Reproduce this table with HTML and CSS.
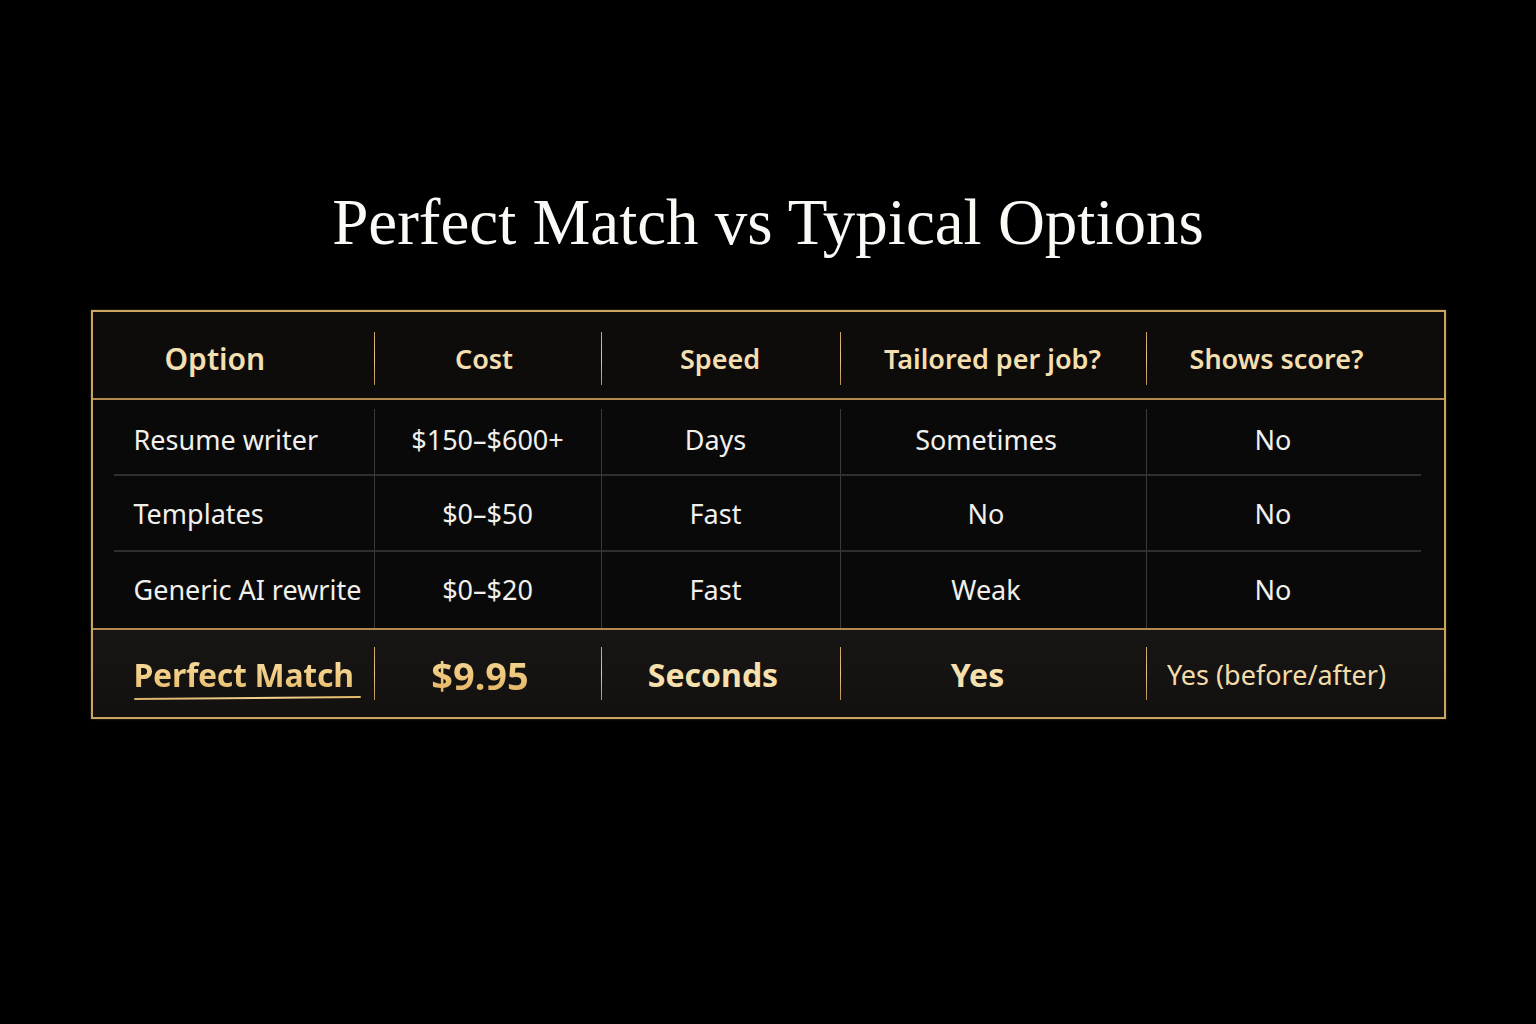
FILE: index.html
```html
<!DOCTYPE html>
<html lang="en">
<head>
<meta charset="utf-8">
<title>Perfect Match vs Typical Options</title>
<link rel="stylesheet" href="styles.css">
</head>
<body>
<main class="page">
  <h1 class="title">Perfect Match vs Typical Options</h1>
  <section class="table">
    <div class="row head">
      <div class="cell c1">Option</div>
      <div class="cell c2 div-gold">Cost</div>
      <div class="cell c3 div-gold">Speed</div>
      <div class="cell c4 div-gold">Tailored per job?</div>
      <div class="cell c5 div-gold">Shows score?</div>
    </div>
    <div class="body">
      <div class="row brow sep">
        <div class="cell c1">Resume writer</div>
        <div class="cell c2">$150–$600+</div>
        <div class="cell c3">Days</div>
        <div class="cell c4">Sometimes</div>
        <div class="cell c5">No</div>
      </div>
      <div class="row brow sep">
        <div class="cell c1">Templates</div>
        <div class="cell c2">$0–$50</div>
        <div class="cell c3">Fast</div>
        <div class="cell c4">No</div>
        <div class="cell c5">No</div>
      </div>
      <div class="row brow">
        <div class="cell c1">Generic AI rewrite</div>
        <div class="cell c2">$0–$20</div>
        <div class="cell c3">Fast</div>
        <div class="cell c4">Weak</div>
        <div class="cell c5">No</div>
      </div>
    </div>
    <div class="row foot">
      <div class="cell c1"><span class="brand">Perfect Match</span></div>
      <div class="cell c2 div-gold"><span class="price">$9.95</span></div>
      <div class="cell c3 div-gold"><span class="strong">Seconds</span></div>
      <div class="cell c4 div-gold"><span class="strong">Yes</span></div>
      <div class="cell c5 div-gold"><span class="soft">Yes (before/after)</span></div>
    </div>
  </section>
</main>
</body>
</html>
```

FILE: styles.css
```css
* { box-sizing: border-box; }
html, body {
  margin: 0;
  padding: 0;
  background: #000;
}
body {
  width: 1536px;
  height: 1024px;
  overflow: hidden;
  font-family: "Noto Sans", "Open Sans", sans-serif;
}
.page {
  padding-top: 182px;
  display: flex;
  flex-direction: column;
  align-items: center;
}
.title {
  margin: 0;
  font-family: "Liberation Serif", "Times New Roman", serif;
  font-weight: 400;
  font-size: 65px;
  line-height: 80px;
  color: #fbfaf6;
  letter-spacing: 0;
}
.table {
  margin-top: 48px;
  width: 1355px;
  border: 2px solid #c9a462;
  background: #0b0a09;
  box-shadow: 0 0 2px rgba(201,164,98,0.4);
}
.row {
  display: grid;
  grid-template-columns: 281px 227px 239px 306px 1fr;
  align-items: stretch;
}
.cell {
  position: relative;
  display: flex;
  align-items: center;
  justify-content: center;
  white-space: nowrap;
}
.c1 { justify-content: flex-start; padding-left: 41px; }
.c5 { padding-right: 36px; }

/* header */
.head {
  height: 88px;
  background: #0d0c0b;
  border-bottom: 2px solid #b48a4e;
  color: #f4dfb0;
  font-size: 27px;
  font-weight: 600;
}
.head .c1 { padding-left: 72px; font-size: 30px; }
.head .c2 { padding-right: 6px; }
.head .cell { padding-top: 6px; }
.div-gold::before {
  content: "";
  position: absolute;
  left: 0;
  top: 20px;
  bottom: 13px;
  width: 1px;
  background: linear-gradient(#caa463, #e5c786 50%, #b8904f);
}

/* body */
.body {
  padding-top: 9px;
  background: #090909;
}
.brow {
  position: relative;
  height: 76px;
  color: #f1f0ec;
  font-size: 27px;
}
.brow:first-child { height: 66px; }
.brow:first-child .cell { padding-bottom: 6px; }
.brow:last-child { height: 77px; }
.brow .c2, .brow .c3, .brow .c4, .brow .c5 {
  border-left: 1px solid #3b3a38;
}
.brow .c3 { padding-right: 10px; }
.brow .c4 { padding-right: 14px; }
.brow .c5 { padding-right: 44px; }
.sep::after {
  content: "";
  position: absolute;
  left: 21px;
  right: 23px;
  bottom: -1px;
  height: 2px;
  background: #2f2e2c;
}

/* footer */
.foot {
  height: 89px;
  background: linear-gradient(180deg, #171614, #121110);
  border-top: 2px solid #b48a4e;
}
.foot .cell { padding-top: 2px; }
.foot .c2 { padding-right: 14px; }
.foot .c3 { padding-right: 14px; }
.foot .c4 { padding-right: 30px; }
.foot .div-gold::before { top: 17px; bottom: 17px; }
.brand {
  position: relative;
  font-size: 32px;
  font-weight: 700;
  color: #f0cf8a;
  background: linear-gradient(180deg, #fbe3a8, #e7b864);
  -webkit-background-clip: text;
  background-clip: text;
  -webkit-text-fill-color: transparent;
  letter-spacing: -0.3px;
}
.brand::after {
  content: "";
  position: absolute;
  left: 0;
  right: -7px;
  bottom: -3px;
  height: 2px;
  border-radius: 2px;
  background: linear-gradient(90deg, #d9b068, #f3d38f 60%, #e2b868);
  transform: rotate(-0.5deg);
}
.price {
  font-size: 38px;
  font-weight: 700;
  background: linear-gradient(180deg, #fbe1a2, #e1ac58);
  -webkit-background-clip: text;
  background-clip: text;
  -webkit-text-fill-color: transparent;
}
.strong {
  font-size: 32px;
  font-weight: 700;
  color: #f6e0ad;
}
.soft {
  font-size: 27px;
  font-weight: 400;
  color: #f3dcaa;
}
```
